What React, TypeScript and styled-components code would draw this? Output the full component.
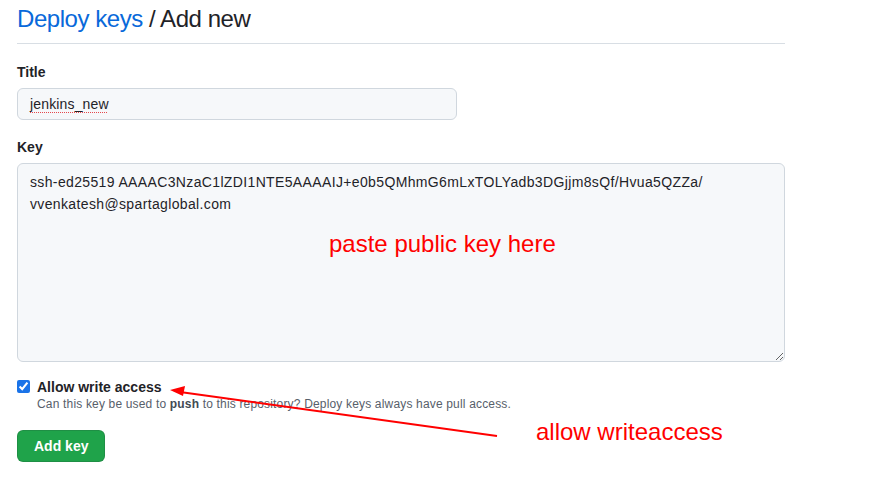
import React from "react";
import styled, { createGlobalStyle } from "styled-components";

const Global = createGlobalStyle`
  html, body { margin: 0; padding: 0; background: #ffffff; }
  body { font-family: "Liberation Sans", Arial, sans-serif; color: #1f2328; }
  * { box-sizing: border-box; }
`;

const Page = styled.div`
  position: relative;
  width: 885px;
  height: 490px;
  overflow: hidden;
  padding: 0 17px;
`;

const Main = styled.div`
  width: 768px;
  display: flex;
  flex-direction: column;
`;

const Header = styled.div`
  margin-top: 4px;
  padding-bottom: 9px;
  border-bottom: 1px solid #d8dee4;
`;

const Heading = styled.h2`
  margin: 0;
  font-size: 24px;
  line-height: 30px;
  font-weight: 400;
  letter-spacing: -0.45px;
  color: #1f2328;
`;

const Crumb = styled.a`
  color: #0969da;
  text-decoration: none;
`;

const Group = styled.div<{ $top: number }>`
  margin-top: ${(p) => p.$top}px;
  display: flex;
  flex-direction: column;
  align-items: flex-start;
`;

const Label = styled.label`
  font-size: 14px;
  line-height: 20px;
  font-weight: 700;
  color: #1f2328;
  margin-bottom: 6px;
`;

const TextField = styled.div`
  width: 440px;
  height: 32px;
  padding: 0 12px;
  display: flex;
  align-items: center;
  font-size: 14px;
  letter-spacing: 0.15px;
  color: #1f2328;
  background: #f6f8fa;
  border: 1px solid #d0d7de;
  border-radius: 6px;
`;

const Misspelled = styled.span`
  text-decoration: underline dotted #e5484d;
  text-decoration-thickness: 1px;
  text-underline-offset: 3px;
`;

const KeyArea = styled.textarea`
  width: 768px;
  height: 199px;
  padding: 8px 12px;
  font-family: inherit;
  font-size: 14px;
  line-height: 21.5px;
  letter-spacing: 0.36px;
  color: #1f2328;
  background: #f6f8fa;
  border: 1px solid #d0d7de;
  border-radius: 6px;
  outline: none;
  resize: vertical;
`;

const CheckRow = styled.div`
  margin-top: 17px;
  display: flex;
  align-items: flex-start;
  gap: 7px;
`;

const Check = styled.input`
  margin: 1px 0 0 0;
  width: 13px;
  height: 13px;
  accent-color: #1a73e8;
`;

const CheckText = styled.div`
  display: flex;
  flex-direction: column;
`;

const CheckLabel = styled.label`
  font-size: 14px;
  line-height: 17px;
  font-weight: 700;
  color: #1f2328;
`;

const Note = styled.p`
  margin: 0;
  font-size: 12px;
  line-height: 16px;
  letter-spacing: 0.17px;
  color: #57606a;
  b { color: #424a53; }
`;

const Button = styled.button`
  margin-top: 18px;
  align-self: flex-start;
  height: 32px;
  padding: 0 16px;
  font-family: inherit;
  font-size: 14px;
  font-weight: 700;
  color: #ffffff;
  background: #1fa34a;
  border: 1px solid rgba(31, 35, 40, 0.15);
  border-radius: 6px;
  cursor: pointer;
`;

const Annotation = styled.div<{ $x: number; $y: number }>`
  position: absolute;
  left: ${(p) => p.$x}px;
  top: ${(p) => p.$y}px;
  font-family: "Liberation Sans", Arial, sans-serif;
  font-size: 24px;
  line-height: 28px;
  color: #ff0000;
  white-space: nowrap;
`;

const ArrowSvg = styled.svg`
  position: absolute;
  left: 0;
  top: 0;
  pointer-events: none;
`;

const keyValue =
  "ssh-ed25519 AAAAC3NzaC1lZDI1NTE5AAAAIJ+e0b5QMhmG6mLxTOLYadb3DGjjm8sQf/Hvua5QZZa/\nvvenkatesh@spartaglobal.com";

export default function App() {
  return (
    <>
      <Global />
      <Page>
        <Main>
          <Header>
            <Heading>
              <Crumb href="#">Deploy keys</Crumb> / Add new
            </Heading>
          </Header>
          <Group $top={18}>
            <Label>Title</Label>
            <TextField role="textbox" aria-label="Title">
              <Misspelled>jenkins_new</Misspelled>
            </TextField>
          </Group>
          <Group $top={17}>
            <Label htmlFor="key">Key</Label>
            <KeyArea id="key" defaultValue={keyValue} spellCheck={false} />
          </Group>
          <CheckRow>
            <Check type="checkbox" id="write" defaultChecked />
            <CheckText>
              <CheckLabel htmlFor="write">Allow write access</CheckLabel>
              <Note>
                Can this key be used to <b>push</b> to this repository? Deploy keys always have pull access.
              </Note>
            </CheckText>
          </CheckRow>
          <Button type="button">Add key</Button>
        </Main>
        <Annotation $x={329} $y={230}>paste public key here</Annotation>
        <Annotation $x={536} $y={418}>allow writeaccess</Annotation>
        <ArrowSvg width="885" height="490" viewBox="0 0 885 490">
          <line x1="497" y1="436" x2="180" y2="392" stroke="#ff0000" strokeWidth="2" />
          <polygon points="170,390 185,386 183,396" fill="#ff0000" />
        </ArrowSvg>
      </Page>
    </>
  );
}
